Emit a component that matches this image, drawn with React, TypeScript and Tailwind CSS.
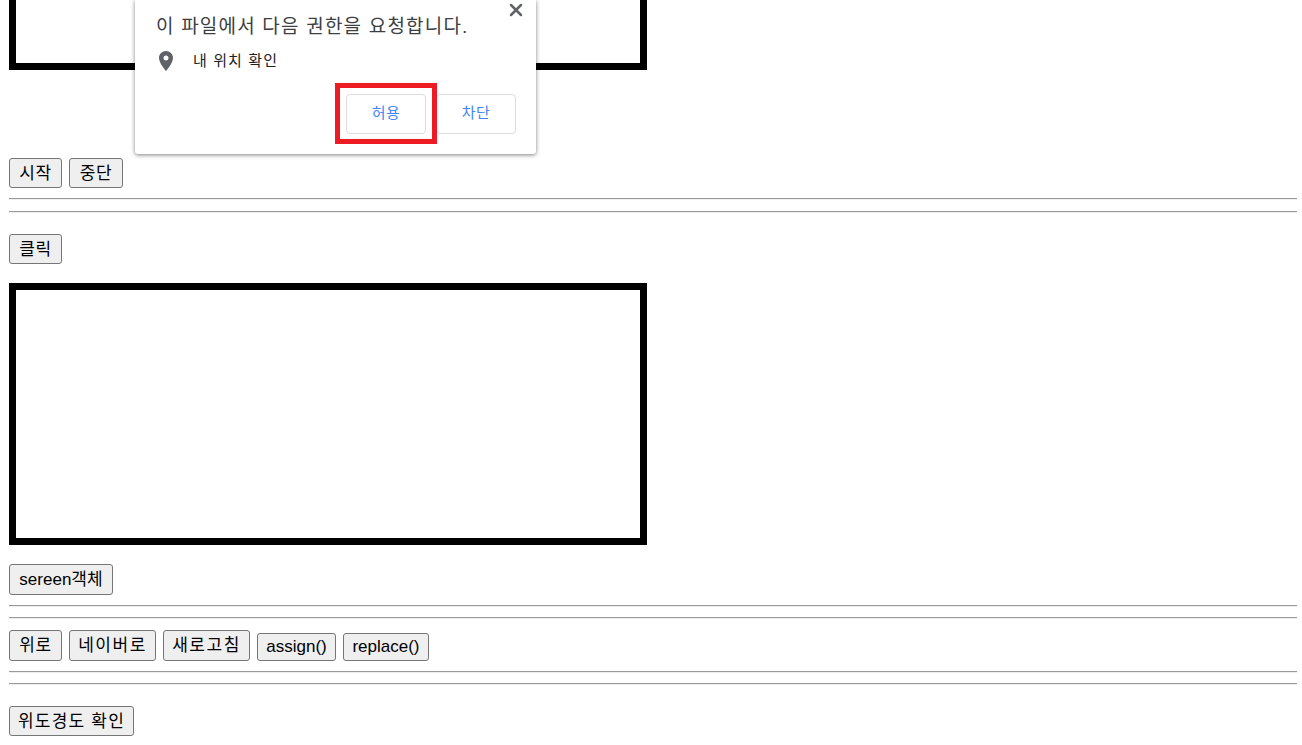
import React from 'react';
import { X } from 'lucide-react';

function Btn({ children, className = "" }: { children: React.ReactNode; className?: string }) {
  return (
    <button className={`inline-flex items-center justify-center bg-[#efefef] border border-[#767676] rounded-[3px] text-[17px] leading-none text-black whitespace-nowrap ${className}`}>
      {children}
    </button>
  );
}

function Rule({ className = "" }: { className?: string }) {
  return <div className={`h-[2px] mr-[-4px] border-t border-[#9a9a9a] bg-[#eeeeee] ${className}`} />;
}

function PopupBtn({ children }: { children: React.ReactNode }) {
  return (
    <button className="h-[40px] w-[80px] rounded-[4px] border border-[#dadce0] bg-white pb-[1px] text-[15px] tracking-[0.5px] text-[#4285f4]">
      {children}
    </button>
  );
}

export default function App() {
  return (
    <div className="relative h-[745px] w-[1302px] overflow-hidden bg-white px-[9px] font-['Liberation_Sans','Noto_Sans_CJK_KR',sans-serif]">
      {/* page is scrolled, only the bottom of the first box shows */}
      <div className="h-[70px] w-[638px] border-x-[7px] border-b-[7px] border-black" />

      <div className="mt-[88px] flex gap-[7px]">
        <Btn className="h-[30px] w-[53px] tracking-[0.5px]">시작</Btn>
        <Btn className="h-[30px] w-[54px] tracking-[0.5px]">중단</Btn>
      </div>
      <Rule className="mt-[10px]" />
      <Rule className="mt-[11px]" />

      <div className="mt-[21px] flex">
        <Btn className="h-[30px] w-[53px] tracking-[0.5px]">클릭</Btn>
      </div>

      <div className="mt-[19px] h-[262px] w-[638px] border-[7px] border-black" />

      <div className="mt-[19px] flex">
        <Btn className="h-[31px] w-[104px]">sereen객체</Btn>
      </div>
      <Rule className="mt-[10px]" />
      <Rule className="mt-[10px]" />

      <div className="mt-[11px] flex items-end gap-[7px]">
        <Btn className="h-[31px] w-[53px] tracking-[0.5px]">위로</Btn>
        <Btn className="h-[31px] w-[87px] tracking-[1.5px]">네이버로</Btn>
        <Btn className="h-[31px] w-[87px] tracking-[1.5px]">새로고침</Btn>
        <Btn className="h-[28px] w-[79px] pb-[2px]">assign()</Btn>
        <Btn className="h-[28px] w-[86px] pb-[2px]">replace()</Btn>
      </div>
      <Rule className="mt-[10px]" />
      <Rule className="mt-[10px]" />

      <div className="mt-[21px] flex">
        <Btn className="h-[30px] w-[125px] tracking-[1.2px]">위도경도 확인</Btn>
      </div>

      {/* permission popup */}
      <div className="absolute left-[135px] top-0 h-[154px] w-[401px] rounded-b-[3px] bg-white shadow-[0_1px_4px_rgba(0,0,0,0.5)]">
        <X size={20} strokeWidth={3} className="absolute right-[10px] top-[0px] text-[#5f6368]" />
        <div className="pl-[21px] pt-[14px] text-[19px] leading-[26px] tracking-[1.2px] text-[#3c4043]">이 파일에서 다음 권한을 요청합니다.</div>
        <div className="mt-[9px] flex h-[24px] items-center pl-[19px]">
          <svg width="24" height="24" viewBox="0 0 24 24" fill="#5f6368">
            <path d="M12 2C8.13 2 5 5.13 5 9c0 5.25 7 13 7 13s7-7.75 7-13c0-3.87-3.13-7-7-7zm0 9.5c-1.38 0-2.5-1.12-2.5-2.5s1.12-2.5 2.5-2.5 2.5 1.12 2.5 2.5-1.12 2.5-2.5 2.5z" />
          </svg>
          <span className="ml-[15px] text-[15px] tracking-[1.1px] text-[#202124]">내 위치 확인</span>
        </div>
        <div className="absolute left-[211px] top-[94px] flex gap-[10px]">
          <PopupBtn>허용</PopupBtn>
          <PopupBtn>차단</PopupBtn>
        </div>
        {/* red highlight added over the screenshot */}
        <div className="absolute left-[200px] top-[83px] h-[61px] w-[102px] border-[5px] border-[#ed1c24]" />
      </div>
    </div>
  );
}
